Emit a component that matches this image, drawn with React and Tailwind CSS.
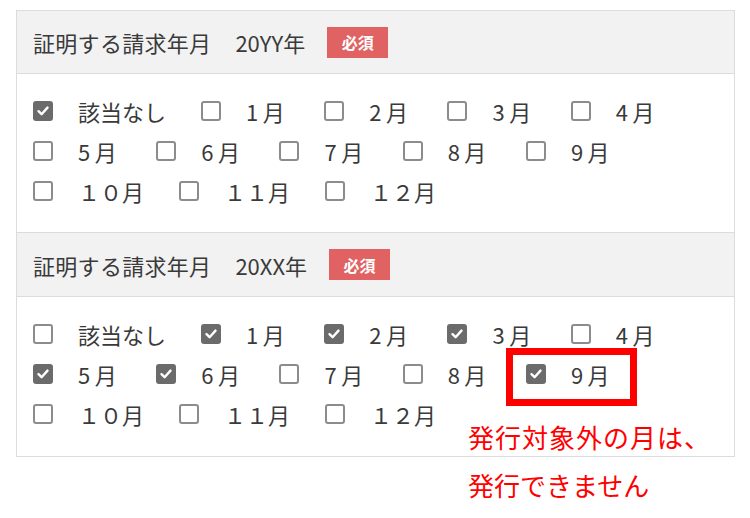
import React from "react";

const sections = [
  {
    year: "20YY年",
    rows: [
      [["該当なし", true], ["1月", false], ["2月", false], ["3月", false], ["4月", false]],
      [["5月", false], ["6月", false], ["7月", false], ["8月", false], ["9月", false]],
      [["１０月", false], ["１１月", false], ["１２月", false]],
    ],
  },
  {
    year: "20XX年",
    rows: [
      [["該当なし", false], ["1月", true], ["2月", true], ["3月", true], ["4月", false]],
      [["5月", true], ["6月", true], ["7月", false], ["8月", false], ["9月", true]],
      [["１０月", false], ["１１月", false], ["１２月", false]],
    ],
  },
];

function Box({ checked }) {
  if (checked) {
    return (
      <span className="w-5 h-5 rounded-[3px] bg-[#6b6b6b] flex items-center justify-center shrink-0">
        <svg width="14" height="14" viewBox="0 0 14 14" fill="none">
          <path d="M2.5 7.2 L5.6 10.2 L11.5 3.6" stroke="#fff" strokeWidth="2.4" strokeLinecap="round" strokeLinejoin="round" />
        </svg>
      </span>
    );
  }
  return <span className="w-5 h-5 rounded-[3px] border-2 border-[#8c8c8c] bg-white shrink-0" />;
}

function Item({ label, checked }) {
  // half-width month labels are spaced wider in the original
  const half = /^[0-9]/.test(label);
  return (
    <label className="inline-flex items-center mr-[35px]">
      <Box checked={checked} />
      <span className={`ml-[25px] leading-none ${half ? "tracking-[4.5px]" : ""}`}>{label}</span>
    </label>
  );
}

export default function App() {
  return (
    <div className="relative w-[750px] h-[518px] bg-white" style={{ fontFamily: "'Noto Sans CJK JP', 'Noto Sans', sans-serif" }}>
      <div className="absolute left-[16px] top-[10px] w-[719px] border border-[#dcdcdc] text-[#3a3a3a]">
        {sections.map((s, si) => (
          <div key={s.year} className={si > 0 ? "border-t border-[#dcdcdc]" : ""}>
            {/* header */}
            <div className={`${si > 0 ? "h-[64px]" : "h-[63px]"} bg-[#f2f2f2] border-b border-[#dcdcdc] flex items-center pl-[16px]`}>
              <span className="text-[22px] leading-none tracking-[0.3px]">証明する請求年月</span>
              <span className="text-[22px] leading-none ml-[24px]">{s.year}</span>
              <span className="ml-[22px] w-[61px] h-[31px] bg-[#e06262] text-white text-[16px] font-bold flex items-center justify-center leading-none">必須</span>
            </div>
            {/* options */}
            <div className={`pt-[17px] ${si > 0 ? "pb-[22px]" : "pb-[21px]"} pl-[16px] text-[22px]`}>
              {s.rows.map((row, ri) => (
                <div key={ri} className="h-10 flex items-center">
                  {row.map(([label, checked]) => (
                    <Item key={label} label={label} checked={checked} />
                  ))}
                </div>
              ))}
            </div>
          </div>
        ))}
      </div>

      {/* annotation */}
      <div className="absolute left-[506px] top-[348px] w-[131px] h-[58px] border-[7px] border-[#ff0000]" />
      <div className="absolute left-[468px] top-[413px] text-[26px] leading-[48px] text-[#ff0000] whitespace-nowrap">
        <div className="tracking-[1px]">発行対象外の月は、</div>
        <div>発行できません</div>
      </div>
    </div>
  );
}
